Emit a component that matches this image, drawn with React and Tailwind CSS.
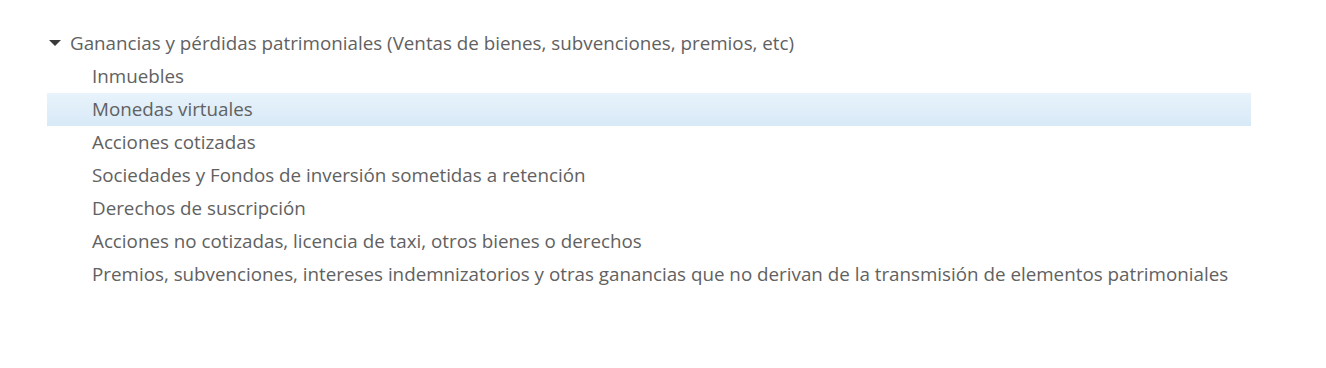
const ITEMS = [
  'Inmuebles',
  'Monedas virtuales',
  'Acciones cotizadas',
  'Sociedades y Fondos de inversión sometidas a retención',
  'Derechos de suscripción',
  'Acciones no cotizadas, licencia de taxi, otros bienes o derechos',
  'Premios, subvenciones, intereses indemnizatorios y otras ganancias que no derivan de la transmisión de elementos patrimoniales',
]

export default function App() {
  return (
    <div className="w-[1326px] h-[368px] bg-white pt-[27px] pl-[47px] text-[#616161] text-[18.8px] font-['Open_Sans',sans-serif]">
      <div className="w-[1204px]">
        <div className="flex items-center h-[33px]">
          <svg width="12" height="6" viewBox="0 0 12 6" className="ml-[2px] mr-[9px] -mt-[2px]">
            <path d="M0 0 H12 L6 6 Z" fill="#3a3a3a" />
          </svg>
          <span>Ganancias y pérdidas patrimoniales (Ventas de bienes, subvenciones, premios, etc)</span>
        </div>
        {ITEMS.map((t, i) => (
          <div
            key={t}
            className={
              'flex items-center h-[33px] pl-[45px] whitespace-nowrap ' +
              (i === 1 ? 'bg-gradient-to-b from-[#e8f3fb] to-[#d8e9f7]' : '')
            }
          >
            {t}
          </div>
        ))}
      </div>
    </div>
  )
}
